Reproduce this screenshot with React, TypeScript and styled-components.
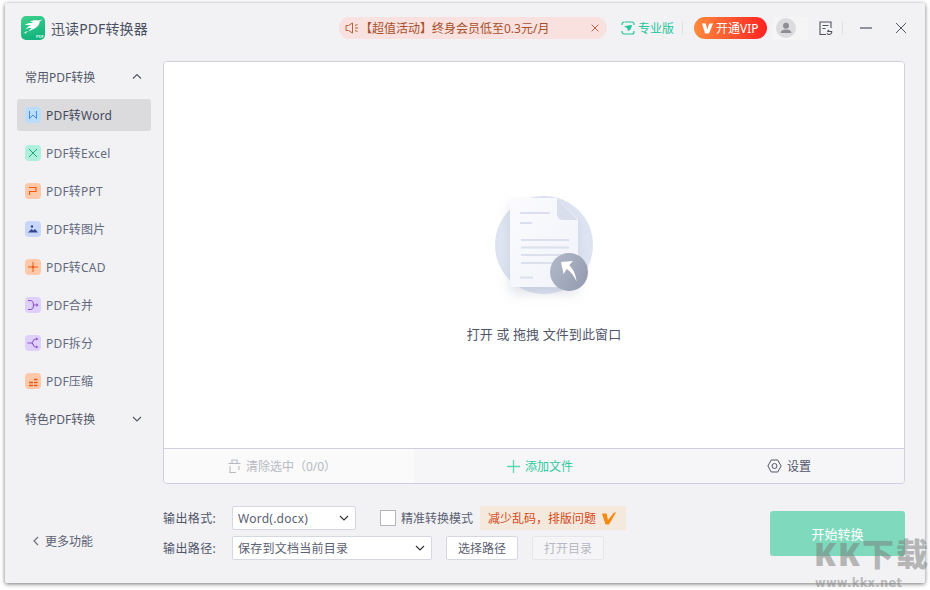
import { ReactElement, ReactNode } from 'react';
import styled, { createGlobalStyle } from 'styled-components';

const GlobalStyle = createGlobalStyle`
  html, body {
    margin: 0;
    padding: 0;
    background: #fff;
  }
  body {
    font-family: "Noto Sans", "Noto Sans CJK SC", sans-serif;
    font-size: 12px;
    color: #5b6072;
  }
  * {
    box-sizing: border-box;
  }
`;

const Page = styled.div`
  position: relative;
  width: 930px;
  height: 590px;
  padding: 3px 5px 7px;
  overflow: hidden;
`;

const Window = styled.div`
  width: 920px;
  height: 580px;
  display: flex;
  flex-direction: column;
  background: #f2f2f5;
  border-radius: 2px;
  box-shadow: 0 1px 4px rgba(0, 0, 0, 0.55);
`;

/* title bar */
const Header = styled.header`
  height: 58px;
  flex: none;
  display: flex;
  align-items: center;
  padding: 0 18px 8px 16px;
`;

const Title = styled.div`
  margin-left: 6px;
  font-size: 14px;
  letter-spacing: 0.1px;
  color: #4c5162;
  flex: 1;
`;

const Promo = styled.div`
  width: 268px;
  height: 22px;
  display: flex;
  align-items: center;
  padding: 0 8px 0 6px;
  border-radius: 11px;
  background: #f8e1de;
  color: #a8502c;
`;

const PromoText = styled.span`
  flex: 1;
  margin-left: 1px;
  white-space: nowrap;
`;

const Edition = styled.div`
  margin-left: 14px;
  display: flex;
  align-items: center;
  gap: 3px;
  color: #27c49a;
`;

const Divider = styled.div<{ $gap: number }>`
  width: 1px;
  height: 14px;
  background: #dfdfe4;
  margin: 0 ${(p) => p.$gap}px 0 8px;
`;

const VipButton = styled.div`
  width: 73px;
  height: 22px;
  display: flex;
  align-items: center;
  padding-left: 8px;
  gap: 3px;
  border-radius: 11px;
  background: linear-gradient(90deg, #ff8a3c, #ff2222);
  color: #fff;
`;

const Avatar = styled.div`
  width: 35px;
  height: 23px;
  margin-left: 6px;
  padding-left: 3px;
  display: flex;
  align-items: center;
  background: #f5f5f6;
`;

const HeaderIcon = styled.div<{ $left: number }>`
  margin-left: ${(p) => p.$left}px;
  display: flex;
  align-items: center;
`;

/* body */
const Body = styled.div`
  flex: 1;
  display: flex;
  min-height: 0;
`;

const Sidebar = styled.nav`
  width: 158px;
  flex: none;
  display: flex;
  flex-direction: column;
  gap: 6px;
  padding: 0 12px;
`;

const GroupHead = styled.div`
  height: 32px;
  display: flex;
  align-items: center;
  justify-content: space-between;
  padding: 0 9px 0 8px;
  color: #55596a;
`;

const NavItem = styled.div<{ $active?: boolean }>`
  height: 32px;
  display: flex;
  align-items: center;
  gap: 5px;
  padding-left: 8px;
  border-radius: 3px;
  letter-spacing: 0.2px;
  background: ${(p) => (p.$active ? '#dbdbde' : 'transparent')};
  color: ${(p) => (p.$active ? '#44495a' : '#636a80')};
`;

const NavIconBox = styled.span<{ $bg: string }>`
  width: 16px;
  height: 16px;
  border-radius: 4px;
  background: ${(p) => p.$bg};
  display: flex;
  align-items: center;
  justify-content: center;
`;

const MoreLink = styled.div`
  margin-top: auto;
  margin-bottom: 33px;
  padding-left: 14px;
  display: flex;
  align-items: center;
  gap: 4px;
  color: #5b6072;
`;

const Main = styled.main`
  flex: 1;
  display: flex;
  flex-direction: column;
  padding-right: 20px;
`;

const Panel = styled.section`
  height: 423px;
  flex: none;
  display: flex;
  flex-direction: column;
  border: 1px solid #cfd0de;
  border-radius: 4px;
  overflow: hidden;
`;

const DropZone = styled.div`
  flex: 1;
  background: #fff;
  display: flex;
  flex-direction: column;
  align-items: center;
  padding: 134px 0 0 20px;
  border-bottom: 1px solid #cfd0de;
`;

const DropText = styled.div`
  margin-top: 16px;
  font-size: 13px;
  letter-spacing: 0.1px;
  color: #50556a;
  white-space: pre;
`;

const Tabs = styled.div`
  height: 34px;
  flex: none;
  display: grid;
  grid-template-columns: 250px 246px 1fr;
`;

const Tab = styled.div<{ $tone: string; $bg: string; $pl?: number; $pr?: number }>`
  display: flex;
  align-items: center;
  justify-content: center;
  gap: 5px;
  padding: 0 ${(p) => p.$pr ?? 0}px 0 ${(p) => p.$pl ?? 0}px;
  color: ${(p) => p.$tone};
  background: ${(p) => p.$bg};
`;

/* output options */
const Options = styled.div`
  flex: 1;
  display: flex;
  justify-content: space-between;
  padding-top: 22px;
`;

const OptionRows = styled.div`
  display: flex;
  flex-direction: column;
  gap: 6px;
`;

const OptionRow = styled.div`
  height: 24px;
  display: flex;
  align-items: center;
`;

const Label = styled.div`
  width: 69px;
  letter-spacing: 0.4px;
  color: #50556a;
`;

const Select = styled.div<{ $width: number }>`
  width: ${(p) => p.$width}px;
  height: 24px;
  display: flex;
  align-items: center;
  justify-content: space-between;
  padding: 0 6px 0 5px;
  background: #fff;
  border: 1px solid #d5d7e2;
  border-radius: 2px;
  letter-spacing: 0.25px;
  color: #5b6072;
`;

const CheckBox = styled.span`
  width: 16px;
  height: 16px;
  margin-left: 24px;
  background: #fff;
  border: 1px solid #b4b4ba;
`;

const CheckLabel = styled.span`
  margin-left: 5px;
  color: #5b6072;
`;

const Tip = styled.div`
  width: 146px;
  height: 24px;
  margin-left: 7px;
  display: flex;
  align-items: center;
  gap: 6px;
  padding-left: 8px;
  background: #f5e8dc;
  color: #d4481a;
`;

const SmallButton = styled.div<{ $disabled?: boolean }>`
  width: 72px;
  height: 24px;
  margin-left: 14px;
  display: flex;
  align-items: center;
  justify-content: center;
  background: ${(p) => (p.$disabled ? '#f5f5f7' : '#fff')};
  border: 1px solid ${(p) => (p.$disabled ? '#e5e5ea' : '#d5d7e2')};
  border-radius: 2px;
  color: ${(p) => (p.$disabled ? '#b6b8c2' : '#5b6072')};
`;

const StartButton = styled.div`
  width: 135px;
  height: 45px;
  margin-top: 5px;
  display: flex;
  align-items: center;
  justify-content: center;
  background: #7fdabd;
  border-radius: 3px;
  color: #fff;
  font-size: 13px;
`;

/* watermark lies over the window */
const Watermark = styled.div`
  position: absolute;
  left: 814px;
  top: 532px;
  color: rgba(120, 120, 120, 0.5);
  font-family: "Noto Sans", "Noto Sans CJK SC", sans-serif;
  font-weight: 900;
  font-size: 32px;
  line-height: 44px;
  letter-spacing: 2px;
  white-space: nowrap;
  pointer-events: none;
`;

const WatermarkUrl = styled.div`
  position: absolute;
  left: 815px;
  top: 575px;
  color: rgba(130, 130, 130, 0.5);
  font-family: "DejaVu Sans", sans-serif;
  font-weight: 700;
  font-size: 11.5px;
  line-height: 16px;
  letter-spacing: 0.3px;
  pointer-events: none;
`;

const Logo = (): ReactElement => (
  <svg width="24" height="24" viewBox="0 0 24 24">
    <defs>
      <linearGradient id="logoBg" x1="0" y1="0" x2="0.3" y2="1">
        <stop offset="0" stopColor="#3fd08c" />
        <stop offset="1" stopColor="#14b47e" />
      </linearGradient>
    </defs>
    <rect width="24" height="24" rx="5" fill="url(#logoBg)" />
    <path
      d="M22 3.500c-2 .4-3.600.7-5 .9C14 3.800 10.500 4.600 8.500 5.800c2 0 3.200.4 4 1-2.800-.3-6 .3-9 2.400 2.300-.3 4.600-.2 6.700.4-2 .6-4 1.700-6 3.800 2.400-1 4.600-1.500 6.500-1.300-1.400 1-2.500 2.300-3.400 4 3.500-2.600 7.700-3.300 10.300-7 .9-1.300 1-2.800 1-3.500.7-.8 2-1.500 3.400-2.100z"
      fill="#fff"
    />
    <path d="M3 16.500l4-1.800-2.500 3z" fill="#fff" opacity="0.8" />
    <text x="15" y="21.500" fontSize="4" fontWeight="700" fill="#d8f7e8" fontFamily="Liberation Sans">
      PDF
    </text>
  </svg>
);

const Speaker = (): ReactElement => (
  <svg width="14" height="12" viewBox="0 0 14 12" fill="none" stroke="#b5603c" strokeWidth="1">
    <path d="M1 3.500h2.500L7.500 1v10L3.500 8.500H1z" />
    <path d="M10 3.500l2.500-1M10 6h3M10 8.500l2.500 1" />
  </svg>
);

const SmallCross = ({ size, color, width }: { size: number; color: string; width: number }): ReactElement => (
  <svg width={size} height={size} viewBox="0 0 12 12" fill="none" stroke={color} strokeWidth={width}>
    <path d="M1 1l10 10M11 1L1 11" />
  </svg>
);

const ProIcon = (): ReactElement => (
  <svg width="14" height="14" viewBox="0 0 14 14" fill="none">
    <path
      d="M3.500 1H11a2 2 0 0 1 2 2v1M13 10v1a2 2 0 0 1-2 2H3a2 2 0 0 1-2-2v-1M1 4V3a2 2 0 0 1 2-2"
      stroke="#1fc79a"
      strokeWidth="1.200"
    />
    <path d="M3 5.500c2.500-.5 5.500-1.500 8-1.500-.5 3-2 6-4.500 6 .5-1.200.3-2.200-.5-3z" fill="#1fc79a" />
  </svg>
);

const VipMark = (): ReactElement => (
  <svg width="11" height="11" viewBox="0 0 11 11">
    <path d="M0 .5h3.800l1.400 6 2-6H11L7 10.500H3z" fill="#fff" />
  </svg>
);

const UserIcon = (): ReactElement => (
  <svg width="20" height="20" viewBox="0 0 20 20">
    <circle cx="10" cy="10" r="10" fill="#dcdcdf" />
    <circle cx="10" cy="7.800" r="3" fill="#8e8e93" />
    <path d="M4.500 15c.3-2.500 2.500-3.500 5.500-3.500s5.200 1 5.500 3.500z" fill="#8e8e93" />
  </svg>
);

const HistoryIcon = (): ReactElement => (
  <svg width="15" height="15" viewBox="0 0 15 15" fill="none" stroke="#50545f" strokeWidth="1.100">
    <path d="M7 13.500H1V1h11v6" />
    <path d="M3.500 4.500h6M3.500 7.500h3" />
    <path d="M8.500 10.500h4.500M13 10.500c-.3 1.800-1.300 3-2.800 3-1 0-1.800-.5-2.200-1.300" />
    <path d="M10 8.800l-1.600 1.700" />
  </svg>
);

const Chevron = ({ dir, color = '#555a68' }: { dir: 'up' | 'down' | 'left'; color?: string }): ReactElement => {
  const paths = {
    up: 'M1 6.500L5 2.500l4 4',
    down: 'M1 3l4 4 4-4',
    left: 'M7 1L3 5l4 4',
  };
  return (
    <svg width="10" height="10" viewBox="0 0 10 10" fill="none" stroke={color} strokeWidth="1.200">
      <path d={paths[dir]} />
    </svg>
  );
};

const GlyphBase = ({ children }: { children: ReactNode }): ReactElement => (
  <svg width="12" height="12" viewBox="0 0 12 12" fill="none">
    {children}
  </svg>
);

const navItems: { label: string; bg: string; icon: ReactNode }[] = [
  {
    label: 'PDF转Word',
    bg: '#bcdcfb',
    icon: <path d="M2.500 2v7.500L6 6l3.500 3.500V2" stroke="#3f8be6" />,
  },
  {
    label: 'PDF转Excel',
    bg: '#aef0dc',
    icon: <path d="M2 2l8 8M10 2l-8 8" stroke="#1aa97c" />,
  },
  {
    label: 'PDF转PPT',
    bg: '#ffc8a8',
    icon: <path d="M2.500 10V6.500h6.500V2.500H2" stroke="#f0590f" strokeWidth="1.100" />,
  },
  {
    label: 'PDF转图片',
    bg: '#c8d6fb',
    icon: (
      <>
        <circle cx="5" cy="3.500" r="1.200" fill="#33458f" />
        <path d="M1 9.500l3.500-3.500 1.800 1.600L8 6l3 3.500z" fill="#33458f" />
      </>
    ),
  },
  {
    label: 'PDF转CAD',
    bg: '#ffc8a8',
    icon: (
      <>
        <path d="M6 1v10M1 6h10" stroke="#f0590f" />
        <circle cx="6" cy="6" r="1.300" fill="#f0590f" />
      </>
    ),
  },
  {
    label: 'PDF合并',
    bg: '#decffb',
    icon: (
      <>
        <path d="M1 1.500h2.500c1.500 0 3 2 3 4.500s-1.500 4.500-3 4.500H1M6.500 6H10" stroke="#8a55c8" strokeWidth="1.100" />
        <path d="M9.500 4l2 2-2 2z" fill="#8a55c8" />
      </>
    ),
  },
  {
    label: 'PDF拆分',
    bg: '#decffb',
    icon: (
      <>
        <path d="M.5 6h4c1.500 0 1.500-4 4-4h1M4.500 6c2 0 1.500 4 4 4h1" stroke="#8a55c8" strokeWidth="1.100" />
        <path d="M9 .5L11.500 2 9 3.500zM9 8.500l2.500 1.500L9 11.500z" fill="#8a55c8" />
      </>
    ),
  },
  {
    label: 'PDF压缩',
    bg: '#ffc8a8',
    icon: <path d="M7 4.500h3.500M2 7.500h4M7 7.500h3.500M2 10.500h4M7 10.500h3.500" stroke="#e8560f" strokeWidth="1.400" />,
  },
];

const DocIllustration = (): ReactElement => (
  <svg width="110" height="112" viewBox="-5 0 110 112" fill="none">
    <defs>
      <radialGradient id="disc" cx="0.5" cy="0.5" r="0.5">
        <stop offset="0" stopColor="#eef1f8" />
        <stop offset="1" stopColor="#dde3f1" />
      </radialGradient>
      <linearGradient id="page" x1="0" y1="0" x2="1" y2="1">
        <stop offset="0" stopColor="#fbfbfe" />
        <stop offset="1" stopColor="#f1f3f9" />
      </linearGradient>
      <linearGradient id="badge" x1="0" y1="0" x2="1" y2="0.6">
        <stop offset="0" stopColor="#b3bacb" />
        <stop offset="1" stopColor="#979eb1" />
      </linearGradient>
      <filter id="soft" x="-30%" y="-20%" width="160%" height="150%">
        <feDropShadow dx="0" dy="6" stdDeviation="6" floodColor="#8d96ad" floodOpacity="0.3" />
      </filter>
    </defs>
    <circle cx="50" cy="49" r="49" fill="url(#disc)" />
    <path
      d="M18 2h45l21 21v64a4 4 0 0 1-4 4H20a4 4 0 0 1-4-4V4a2 2 0 0 1 2-2z"
      fill="url(#page)"
      filter="url(#soft)"
    />
    <path d="M63 2v16a6 6 0 0 0 5 6h16z" fill="#d8deeb" />
    <g stroke="#dbe0ec" strokeWidth="2">
      <path d="M26 17h30M26 27h12M27 44h48M27 51.500h48M27 59h48M27 67h36M26 81.500h13" />
    </g>
    <circle cx="75" cy="76" r="19" fill="url(#badge)" />
    <path d="M67 66l12-1-3.800 4.300c4 4 6.500 8.500 7.300 16-2.500-5.500-5.500-9.500-9.800-12.300L69.500 78z" fill="#fff" />
  </svg>
);

const TrashIcon = (): ReactElement => (
  <svg width="13" height="14" viewBox="0 0 13 14" fill="none" stroke="#b7b9c2" strokeWidth="1.100">
    <path d="M4 4V1h5v3M.5 4.500h12M2 7v6.500h6M11 7v4" />
  </svg>
);

const PlusIcon = (): ReactElement => (
  <svg width="13" height="13" viewBox="0 0 13 13" stroke="#5fd6af" strokeWidth="1.300">
    <path d="M6.500 0v13M0 6.500h13" />
  </svg>
);

const SettingsIcon = (): ReactElement => (
  <svg width="15" height="14" viewBox="0 0 15 14" fill="none" stroke="#50556a" strokeWidth="1">
    <path d="M4.200 1h6.600l3.300 6-3.300 6H4.200L.9 7z" />
    <circle cx="7.500" cy="7" r="2.500" />
  </svg>
);

const TipMark = (): ReactElement => (
  <svg width="14" height="13" viewBox="0 0 14 13">
    <path d="M0 1.500h4.500L6 8l6-7.500h2L7 12.500H3.500z" fill="#f58a10" />
  </svg>
);

const App = (): ReactElement => {
  return (
    <Page>
      <GlobalStyle />
      <Window>
        <Header>
          <Logo />
          <Title>迅读PDF转换器</Title>
          <Promo>
            <Speaker />
            <PromoText>【超值活动】终身会员低至0.3元/月</PromoText>
            <SmallCross size={8} color="#a8502c" width={1.300} />
          </Promo>
          <Edition>
            <ProIcon />
            专业版
          </Edition>
          <Divider $gap={11} />
          <VipButton>
            <VipMark />
            开通VIP
          </VipButton>
          <Avatar>
            <UserIcon />
          </Avatar>
          <HeaderIcon $left={11}>
            <HistoryIcon />
          </HeaderIcon>
          <Divider $gap={17} />
          <HeaderIcon $left={0}>
            <svg width="12" height="2" viewBox="0 0 12 2">
              <path d="M0 1h12" stroke="#50545f" strokeWidth="1.200" />
            </svg>
          </HeaderIcon>
          <HeaderIcon $left={23}>
            <SmallCross size={12} color="#50545f" width={1} />
          </HeaderIcon>
        </Header>
        <Body>
          <Sidebar>
            <GroupHead>
              常用PDF转换
              <Chevron dir="up" />
            </GroupHead>
            {navItems.map((item, i) => (
              <NavItem key={item.label} $active={i === 0}>
                <NavIconBox $bg={item.bg}>
                  <GlyphBase>{item.icon}</GlyphBase>
                </NavIconBox>
                {item.label}
              </NavItem>
            ))}
            <GroupHead>
              特色PDF转换
              <Chevron dir="down" />
            </GroupHead>
            <MoreLink>
              <Chevron dir="left" color="#70747f" />
              更多功能
            </MoreLink>
          </Sidebar>
          <Main>
            <Panel>
              <DropZone>
                <DocIllustration />
                <DropText>打开 或 拖拽 文件到此窗口</DropText>
              </DropZone>
              <Tabs>
                <Tab $tone="#b7b9c2" $bg="#fafafb" $pr={14}>
                  <TrashIcon />
                  清除选中（0/0）
                </Tab>
                <Tab $tone="#2fc99e" $bg="#f6f6f9" $pl={6}>
                  <PlusIcon />
                  添加文件
                </Tab>
                <Tab $tone="#50556a" $bg="#f6f6f9" $pl={14}>
                  <SettingsIcon />
                  设置
                </Tab>
              </Tabs>
            </Panel>
            <Options>
              <OptionRows>
                <OptionRow>
                  <Label>输出格式:</Label>
                  <Select $width={124}>
                    Word(.docx)
                    <Chevron dir="down" color="#333" />
                  </Select>
                  <CheckBox />
                  <CheckLabel>精准转换模式</CheckLabel>
                  <Tip>
                    减少乱码，排版问题
                    <TipMark />
                  </Tip>
                </OptionRow>
                <OptionRow>
                  <Label>输出路径:</Label>
                  <Select $width={200}>
                    保存到文档当前目录
                    <Chevron dir="down" color="#333" />
                  </Select>
                  <SmallButton>选择路径</SmallButton>
                  <SmallButton $disabled>打开目录</SmallButton>
                </OptionRow>
              </OptionRows>
              <StartButton>开始转换</StartButton>
            </Options>
          </Main>
        </Body>
      </Window>
      <Watermark>KK下载</Watermark>
      <WatermarkUrl>www.kkx.net</WatermarkUrl>
    </Page>
  );
};

export default App;
